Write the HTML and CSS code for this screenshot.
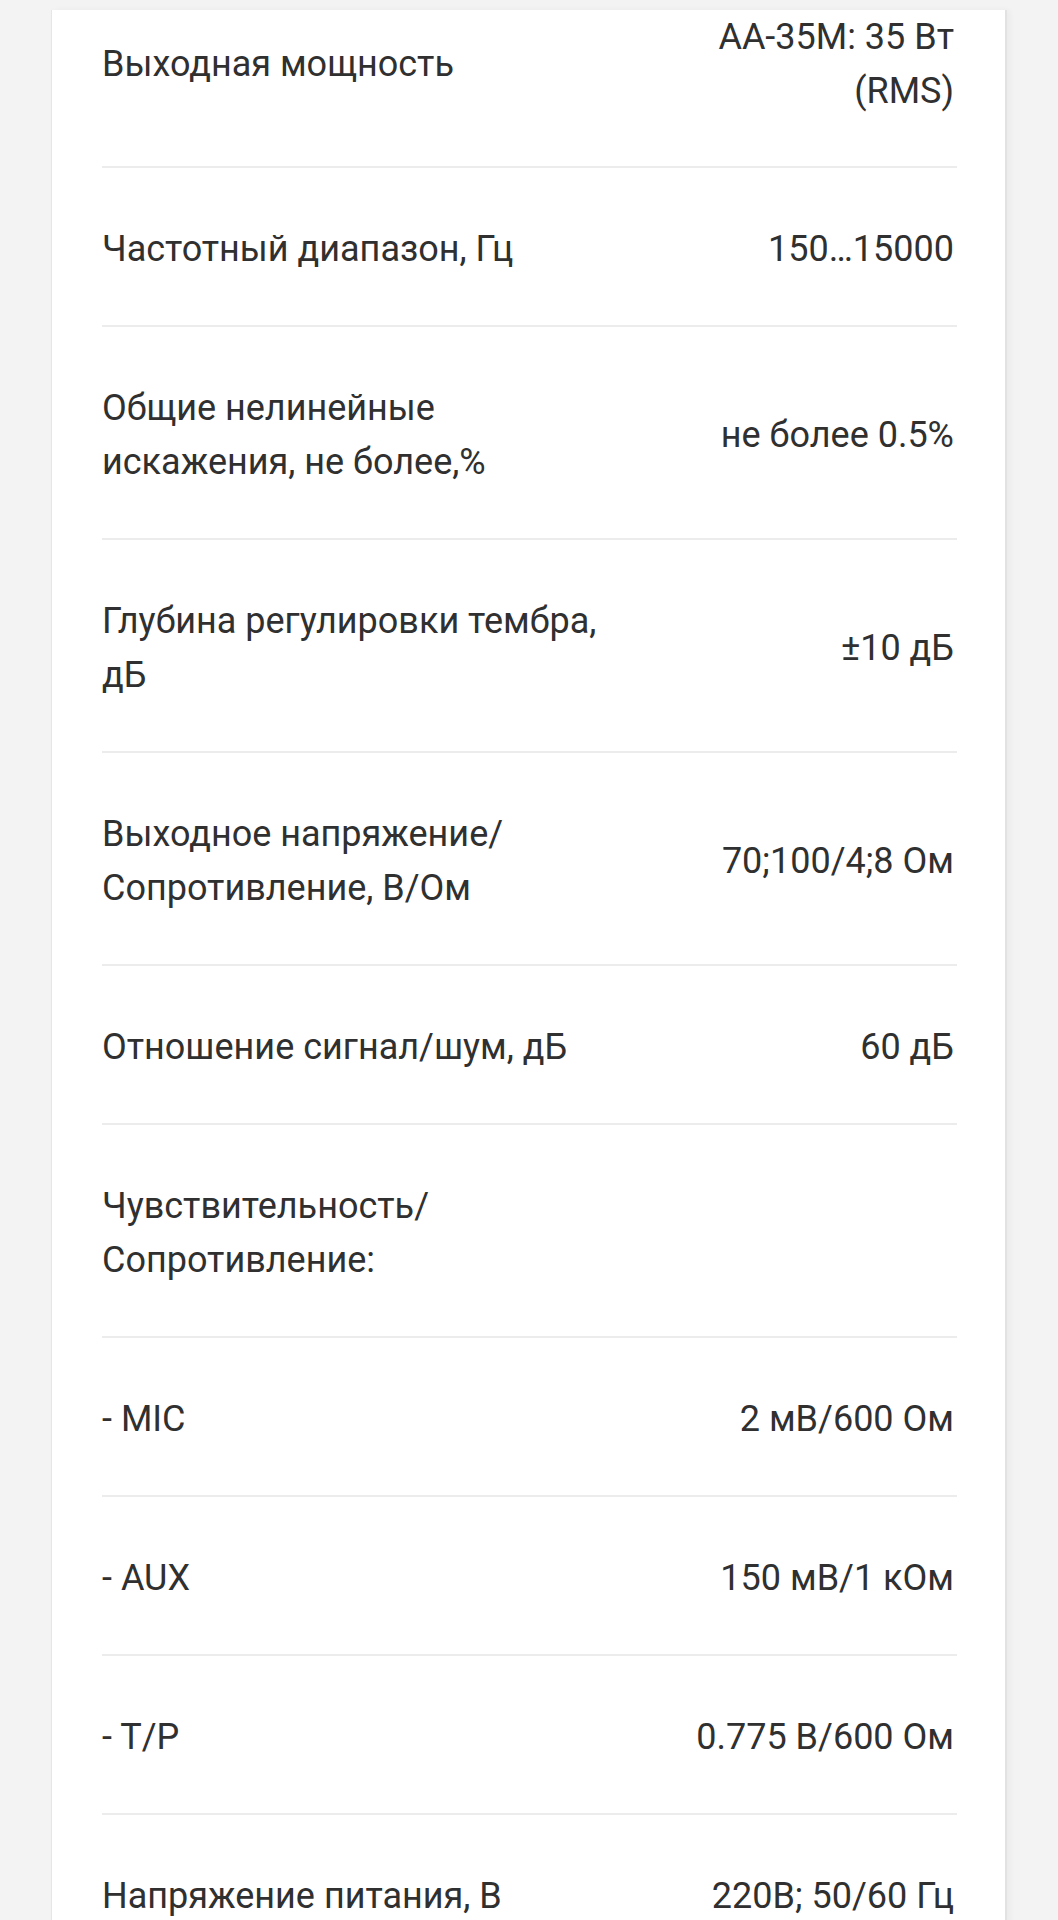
FILE: index.html
```html
<!DOCTYPE html>
<html lang="ru">
<head>
<meta charset="utf-8">
<title>Характеристики</title>
<link rel="stylesheet" href="styles.css">
</head>
<body>
<div class="page">
  <div class="card">
    <div class="row first"><div class="label">Выходная мощность</div><div class="value">AA-35M: 35 Вт<br>(RMS)</div></div>
    <div class="row"><div class="label">Частотный диапазон, Гц</div><div class="value">150…15000</div></div>
    <div class="row"><div class="label">Общие нелинейные<br>искажения, не более,%</div><div class="value">не более 0.5%</div></div>
    <div class="row"><div class="label">Глубина регулировки тембра,<br>дБ</div><div class="value">±10 дБ</div></div>
    <div class="row"><div class="label">Выходное напряжение/<br>Сопротивление, В/Ом</div><div class="value">70;100/4;8 Ом</div></div>
    <div class="row"><div class="label">Отношение сигнал/шум, дБ</div><div class="value">60 дБ</div></div>
    <div class="row"><div class="label">Чувствительность/<br>Сопротивление:</div><div class="value"></div></div>
    <div class="row"><div class="label">- MIC</div><div class="value">2 мВ/600 Ом</div></div>
    <div class="row"><div class="label">- AUX</div><div class="value">150 мВ/1 кОм</div></div>
    <div class="row"><div class="label">- T/P</div><div class="value">0.775 В/600 Ом</div></div>
    <div class="row last"><div class="label">Напряжение питания, В</div><div class="value">220В; 50/60 Гц</div></div>
  </div>
</div>
</body>
</html>
```
FILE: styles.css
```css
html, body {
  margin: 0;
  padding: 0;
}
body {
  background: #f3f3f3;
  font-family: Roboto, "Noto Sans", "DejaVu Sans", sans-serif;
  color: #303030;
  height: 1920px;
  overflow: hidden;
}
.page {
  padding-top: 10px;
}
.card {
  margin-left: 51px;
  width: 956px;
  box-sizing: border-box;
  background: #ffffff;
  border-left: 1px solid #e6e6e6;
  border-right: 2px solid #e2e2e2;
  box-shadow: 3px 0 6px rgba(0, 0, 0, 0.04);
  padding: 0 48px 0 50px;
  min-height: 1910px;
}
.row {
  display: flex;
  justify-content: space-between;
  align-items: center;
  gap: 24px;
  padding: 54.5px 0 48.5px;
  border-bottom: 2px solid #ececec;
  font-size: 36px;
  line-height: 54px;
}
.row.first {
  padding-top: 0;
  padding-bottom: 47.5px;
}
.row.last {
  border-bottom: none;
}
.label {
  flex: 0 1 auto;
}
.value {
  flex: 0 0 auto;
  text-align: right;
  padding-right: 3px;
}
```
